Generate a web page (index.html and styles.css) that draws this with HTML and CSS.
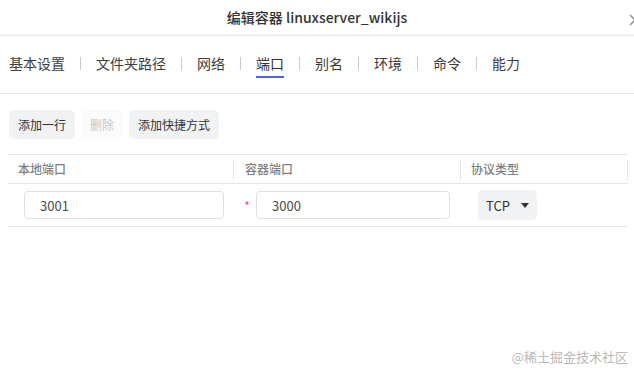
FILE: index.html
```html
<!DOCTYPE html>
<html lang="zh-CN">
<head>
	<meta charset="UTF-8">
	<title>编辑容器</title>
	<link rel="stylesheet" href="styles.css">
</head>
<body>
<div class="dialog">
	<div class="dialog-head">
		<span></span>
		<h1 class="dialog-title">编辑容器 linuxserver_wikijs</h1>
		<span class="close">
			<svg width="12" height="12" viewBox="0 0 12 12"><path d="M1 1 L11 11 M11 1 L1 11" stroke="#9a9a9a" stroke-width="1.6" fill="none"/></svg>
		</span>
	</div>

	<nav class="tabs">
		<span class="tab">基本设置</span><i class="sep"></i>
		<span class="tab">文件夹路径</span><i class="sep"></i>
		<span class="tab">网络</span><i class="sep"></i>
		<span class="tab active">端口</span><i class="sep"></i>
		<span class="tab">别名</span><i class="sep"></i>
		<span class="tab">环境</span><i class="sep"></i>
		<span class="tab">命令</span><i class="sep"></i>
		<span class="tab">能力</span>
	</nav>

	<div class="toolbar">
		<button type="button" class="btn">添加一行</button>
		<button type="button" class="btn" disabled>删除</button>
		<button type="button" class="btn">添加快捷方式</button>
	</div>

	<div class="table">
		<div class="row head">
			<div class="cell">本地端口</div>
			<div class="cell">容器端口</div>
			<div class="cell">协议类型</div>
		</div>
		<div class="row">
			<div class="cell first">
				<input class="field wide" type="text" value="3001">
			</div>
			<div class="cell second">
				<span class="required">*</span>
				<input class="field" type="text" value="3000">
			</div>
			<div class="cell third">
				<span class="select">TCP <span class="caret"></span></span>
			</div>
		</div>
	</div>
</div>

<div class="watermark">@稀土掘金技术社区</div>
</body>
</html>
```

FILE: styles.css
```css
html, body{
	margin: 0;
	height: 100%;
	overflow: hidden;
	background: #fff;
}

body{
	font-family: "Noto Sans CJK SC", "Noto Sans", sans-serif;
	color: #333;
	position: relative;
}

.dialog-head{
	height: 35px;
	display: grid;
	grid-template-columns: 1fr auto 1fr;
	align-items: center;
	border-bottom: 1px solid #e6e6e6;
}
.dialog-title{
	margin: 0;
	font-size: 14px;
	font-weight: 500;
	line-height: 35px;
	color: #333;
}
.close{
	justify-self: end;
	margin-right: -7px;
	margin-top: 5px;
	height: 12px;
}
.close svg{
	display: block;
}

/* tabs */
.tabs{
	display: flex;
	align-items: flex-start;
	padding: 17px 0 15px 9px;
	border-bottom: 1px solid #e6e6e6;
}
.tab{
	font-size: 14px;
	line-height: 20px;
	color: #3d3d3d;
	padding-bottom: 3px;
	border-bottom: 2px solid transparent;
	white-space: nowrap;
}
.tab.active{
	color: #333;
	border-bottom-color: #4863e6;
}
.sep{
	width: 1px;
	height: 13px;
	margin: 4px 15px 0;
	background: #c8c8c8;
}

/* toolbar */
.toolbar{
	display: flex;
	gap: 6px;
	padding: 16px 0 0 9px;
}
.btn{
	font-family: inherit;
	font-size: 12px;
	height: 29px;
	padding: 0 9px;
	border: none;
	border-radius: 5px;
	background: #f1f2f4;
	color: #333;
}
.btn:disabled{
	background: #fbfbfc;
	color: #c6c6c6;
}

/* table */
.table{
	margin: 15px 6px 0 8px;
	border-top: 1px solid #e6e6e6;
}
.row{
	display: grid;
	grid-template-columns: 226px 227px 1fr;
	border-bottom: 1px solid #e6e6e6;
}
.row.head{
	height: 28px;
}
.head .cell{
	position: relative;
	font-size: 12px;
	font-weight: 500;
	color: #808080;
	line-height: 28px;
	padding-left: 10px;
}
.head .cell:nth-child(2){
	padding-left: 11px;
}
.head .cell::after{
	content: "";
	position: absolute;
	right: 0;
	top: 5px;
	width: 1px;
	height: 20px;
	background: #e6e6e6;
}
.row:not(.head){
	height: 42px;
	align-items: center;
}
.cell.first{
	padding-left: 16px;
}
.cell.second{
	display: flex;
	align-items: center;
	padding-left: 7px;
}
.cell.third{
	padding-left: 17px;
}
.field{
	box-sizing: border-box;
	height: 28px;
	border: 1px solid #dcdfe4;
	border-radius: 4px;
	padding: 0 15px;
	font-family: inherit;
	font-size: 13px;
	color: #4a4a4a;
	width: 194px;
	outline: none;
}
.field.wide{
	width: 200px;
}
.required{
	color: #e2557a;
	font-size: 12px;
	width: 12px;
	margin-right: 3px;
	text-align: center;
}
.select{
	display: inline-flex;
	align-items: center;
	height: 30px;
	width: 59px;
	box-sizing: border-box;
	padding-left: 8px;
	border-radius: 5px;
	background: #f1f2f4;
	font-size: 13px;
	color: #333;
}
.caret{
	width: 0;
	height: 0;
	margin-left: 11px;
	border-left: 4px solid transparent;
	border-right: 4px solid transparent;
	border-top: 5px solid #333;
}

.watermark{
	position: absolute;
	right: 6px;
	bottom: 6px;
	font-size: 13px;
	color: #b9b9b9;
	font-family: "Noto Sans CJK SC", sans-serif;
}
```
